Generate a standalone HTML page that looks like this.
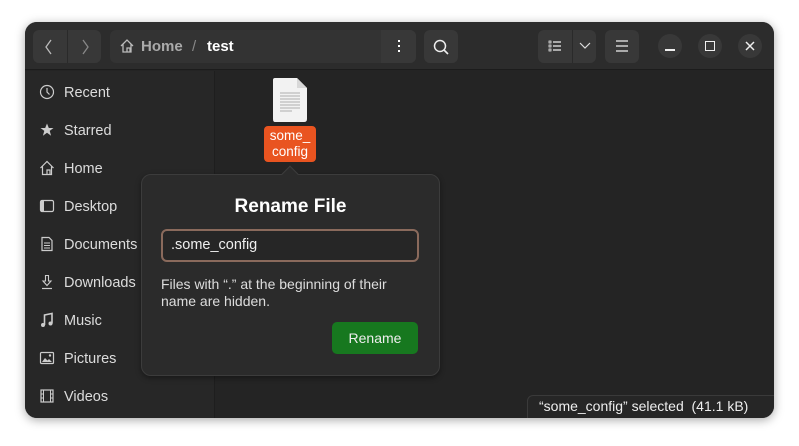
<!DOCTYPE html>
<html><head><style>
*{margin:0;padding:0;box-sizing:border-box}
body{width:799px;height:446px;background:#fff;font-family:"Liberation Sans",sans-serif;position:relative;overflow:hidden}
.win{position:absolute;left:25px;top:22px;width:749px;height:396px;background:#242424;border-radius:12px;overflow:hidden;box-shadow:0 2px 10px rgba(0,0,0,.35)}
.hdr{position:absolute;left:0;top:0;width:749px;height:48px;background:#2c2c2c;border-bottom:1px solid #1c1c1c}
.btn{position:absolute;background:#383838;border-radius:6px}
.side{position:absolute;left:0;top:49px;width:190px;height:347px;background:#272727;border-right:1px solid #1e1e1e}
.it{position:absolute;left:14px;color:#dcdcdc;font-size:14.5px;height:20px;line-height:20px}
.it svg{position:absolute;left:0;top:2px}
.it span{position:absolute;left:25px;top:1px;white-space:nowrap}
.t{position:absolute;color:#fff;white-space:nowrap}
</style></head><body>
<div class="win">
 <div class="hdr">
  <div class="btn" style="left:8px;top:8px;width:68px;height:33px"></div>
  <div style="position:absolute;left:42px;top:8px;width:1px;height:33px;background:#2a2a2a"></div>
  <svg style="position:absolute;left:18px;top:16px" width="12" height="18"><path d="M8 2 L3 9 L8 16" stroke="#bbb" stroke-width="1.3" fill="none"/></svg>
  <svg style="position:absolute;left:54px;top:16px" width="12" height="18"><path d="M4 2 L9 9 L4 16" stroke="#888" stroke-width="1.3" fill="none"/></svg>
  <div class="btn" style="left:85px;top:8px;width:306px;height:33px;background:#333"></div>
  <div class="btn" style="left:356px;top:8px;width:35px;height:33px;border-radius:0 6px 6px 0"></div>
  <div style="position:absolute;left:373px;top:18px;width:2px;height:2px;background:#fff;box-shadow:0 5px #fff,0 10px #fff"></div>
  <svg style="position:absolute;left:94px;top:16px" width="16" height="16"><path d="M2 8 L8 2 L14 8 M4 6 V14 H12 V6 M8 14 V10 H11 V14" stroke="#bbb" stroke-width="1.3" fill="none"/></svg>
  <div class="t" style="left:116px;top:16px;font-size:15px;font-weight:bold;color:#aaa">Home</div>
  <div class="t" style="left:167px;top:16px;font-size:15px;color:#888">/</div>
  <div class="t" style="left:182px;top:16px;font-size:15px;font-weight:bold">test</div>
  <div class="btn" style="left:399px;top:8px;width:34px;height:33px"></div>
  <svg style="position:absolute;left:406px;top:15px" width="20" height="20"><circle cx="9" cy="9" r="5.5" stroke="#eee" stroke-width="1.5" fill="none"/><path d="M13 13 L17 17" stroke="#eee" stroke-width="1.6"/></svg>
  <div class="btn" style="left:513px;top:8px;width:58px;height:33px"></div>
  <div style="position:absolute;left:547px;top:8px;width:1px;height:33px;background:#2a2a2a"></div>
  <svg style="position:absolute;left:522px;top:16px" width="16" height="16"><path d="M2 3h2v2h-2zM2 7h2v2h-2zM2 11h2v2h-2z" stroke="#eee" fill="none" stroke-width=".8"/><path d="M6 4H14M6 8H14M6 12H14" stroke="#eee" stroke-width="1.2"/></svg>
  <svg style="position:absolute;left:553px;top:18px" width="14" height="10"><path d="M2 3 L7 8 L12 3" stroke="#ddd" stroke-width="1.2" fill="none"/></svg>
  <div class="btn" style="left:580px;top:8px;width:34px;height:33px"></div>
  <svg style="position:absolute;left:589px;top:17px" width="16" height="14"><path d="M2 2H14M2 7H14M2 12H14" stroke="#eee" stroke-width="1.2"/></svg>
  <div class="btn" style="left:633px;top:12px;width:24px;height:24px;border-radius:50%"></div>
  <div style="position:absolute;left:640px;top:27px;width:10px;height:1.5px;background:#eee"></div>
  <div class="btn" style="left:673px;top:12px;width:24px;height:24px;border-radius:50%"></div>
  <div style="position:absolute;left:680px;top:19px;width:10px;height:10px;border:1.4px solid #eee"></div>
  <div class="btn" style="left:713px;top:12px;width:24px;height:24px;border-radius:50%"></div>
  <svg style="position:absolute;left:719px;top:18px" width="12" height="12"><path d="M2 2L10 10M10 2L2 10" stroke="#eee" stroke-width="1.5"/></svg>
 </div>
 <div class="side">
  <div class="it" style="top:11px"><svg width="16" height="16"><circle cx="8" cy="8" r="6.5" stroke="#ccc" fill="none" stroke-width="1.2"/><path d="M8 4V8L10.5 10.5" stroke="#ccc" fill="none" stroke-width="1.2"/></svg><span>Recent</span></div>
  <div class="it" style="top:49px"><svg width="16" height="16"><path d="M8 1.5L9.8 6H14.5L10.7 8.9L12.1 13.7L8 10.8L3.9 13.7L5.3 8.9L1.5 6H6.2Z" fill="#ccc"/></svg><span>Starred</span></div>
  <div class="it" style="top:87px"><svg width="16" height="16"><path d="M1.5 8L8 1.5L14.5 8M3.5 6.5V14.5H12.5V6.5M8 14.5V10H11V14.5" stroke="#ccc" fill="none" stroke-width="1.2"/></svg><span>Home</span></div>
  <div class="it" style="top:125px"><svg width="16" height="16"><rect x="1.5" y="2.5" width="13" height="11" rx="1.5" stroke="#ccc" fill="none" stroke-width="1.2"/><rect x="2" y="3" width="3" height="10" fill="#ccc"/></svg><span>Desktop</span></div>
  <div class="it" style="top:163px"><svg width="16" height="16"><path d="M3 1.5H10L13 4.5V14.5H3Z" stroke="#ccc" fill="none" stroke-width="1.2"/><path d="M5 7H11M5 9.5H11M5 12H11" stroke="#ccc"/></svg><span>Documents</span></div>
  <div class="it" style="top:201px"><svg width="16" height="16"><path d="M6.5 1.5H9.5V7H12L8 11.5L4 7H6.5Z" stroke="#ccc" fill="none" stroke-width="1.1"/><path d="M3 14.5H13" stroke="#ccc" stroke-width="1.2"/></svg><span>Downloads</span></div>
  <div class="it" style="top:239px"><svg width="16" height="16"><path d="M5.5 13V3L13 1.5V11.5" stroke="#ccc" fill="none" stroke-width="1.6"/><circle cx="4" cy="13" r="2" fill="#ccc"/><circle cx="11.5" cy="11.5" r="2" fill="#ccc"/></svg><span>Music</span></div>
  <div class="it" style="top:277px"><svg width="16" height="16"><rect x="1.5" y="2.5" width="13" height="11" rx="1" stroke="#ccc" fill="none" stroke-width="1.2"/><path d="M3 12L6 8L8.5 10.5L10 9L13 12Z" fill="#ccc"/><circle cx="11" cy="5.5" r="1.2" fill="#ccc"/></svg><span>Pictures</span></div>
  <div class="it" style="top:315px"><svg width="16" height="16"><rect x="2" y="2" width="12" height="12" stroke="#ccc" fill="none" stroke-width="1.2"/><path d="M4.5 2V14M11.5 2V14M2 6H4.5M2 10H4.5M11.5 6H14M11.5 10H14" stroke="#ccc"/></svg><span>Videos</span></div>
 </div>
 <svg style="position:absolute;left:246px;top:55px" width="38" height="46"><path d="M2 3Q2 1 4 1H26L36 11V42Q36 45 33 45H4Q2 45 2 42Z" fill="#f2f2f2"/><path d="M26 1V11H36" fill="#d8d8d8"/><path d="M9 16H29M9 19H29M9 22H29M9 25H29M9 28H29M9 31H29M9 34H21" stroke="#999" stroke-width=".8"/></svg>
 <div style="position:absolute;left:239px;top:104px;width:52px;height:36px;background:#e95420;border-radius:4px;color:#fff;font-size:13.5px;line-height:16px;text-align:center;padding-top:2px">some_<br>config</div>
 <div style="position:absolute;left:116px;top:152px;width:299px;height:202px;background:#2b2b2b;border:1px solid #3c3c3c;border-radius:10px;box-shadow:0 2px 6px rgba(0,0,0,.4)"></div>
 <div style="position:absolute;left:259px;top:146px;width:12px;height:12px;background:#2b2b2b;transform:rotate(45deg);border-left:1px solid #3c3c3c;border-top:1px solid #3c3c3c"></div>
 <div class="t" style="left:116px;top:174px;width:299px;text-align:center;font-size:19px;font-weight:bold">Rename File</div>
 <div style="position:absolute;left:136px;top:207px;width:258px;height:33px;border:2px solid #8a6a5c;border-radius:6px;background:#262626"></div>
 <div class="t" style="left:146px;top:215px;font-size:14.5px;color:#eee">.some_config</div>
 <div class="t" style="left:136px;top:254px;font-size:14px;color:#ddd;line-height:17px">Files with “.” at the beginning of their<br>name are hidden.</div>
 <div style="position:absolute;left:307px;top:300px;width:86px;height:32px;background:#17781f;border-radius:5px;color:#eee;font-size:14px;text-align:center;line-height:32px">Rename</div>
 <div style="position:absolute;left:502px;top:373px;width:250px;height:26px;background:#262626;border:1px solid #3a3a3a;border-radius:6px 0 0 0"></div>
 <div class="t" style="left:514px;top:376px;font-size:14px;color:#eee">“some_config” selected&nbsp; (41.1 kB)</div>
</div>
</body></html>
